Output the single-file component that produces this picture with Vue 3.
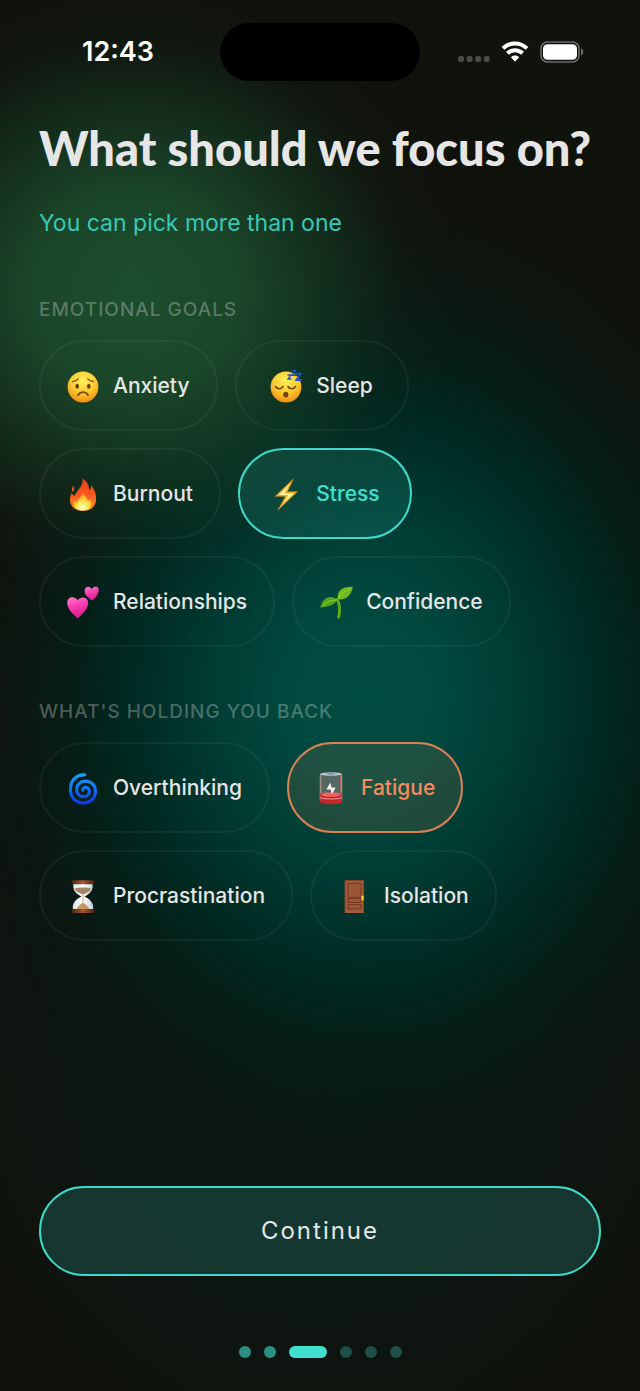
<script setup>
import { ref } from 'vue'

const sections = ref([
  {
    title: 'EMOTIONAL GOALS',
    tone: 'teal',
    rows: [
      [
        { name: 'Anxiety', icon: 'worried' },
        { name: 'Sleep', icon: 'sleeping' }
      ],
      [
        { name: 'Burnout', icon: 'fire' },
        { name: 'Stress', icon: 'bolt', on: true }
      ],
      [
        { name: 'Relationships', icon: 'hearts' },
        { name: 'Confidence', icon: 'seedling' }
      ]
    ]
  },
  {
    title: "WHAT'S HOLDING YOU BACK",
    tone: 'coral',
    rows: [
      [
        { name: 'Overthinking', icon: 'cyclone' },
        { name: 'Fatigue', icon: 'battery', on: true }
      ],
      [
        { name: 'Procrastination', icon: 'hourglass' },
        { name: 'Isolation', icon: 'door' }
      ]
    ]
  }
])

const steps = ['done', 'done', 'current', 'next', 'next', 'next']
</script>

<template>
  <div class="screen">
    <header class="status">
      <div class="clock"><time>12:43</time></div>
      <div class="island"></div>
      <div class="signals">
        <svg width="32" height="8" viewBox="0 0 32 8" fill="#4a4b47" aria-hidden="true">
          <rect x="0" y="1" width="6" height="6" rx="2" />
          <rect x="8.6" y="1" width="6" height="6" rx="2" />
          <rect x="17.2" y="1" width="6" height="6" rx="2" />
          <rect x="25.8" y="1" width="6" height="6" rx="2" />
        </svg>
        <svg width="28" height="22" viewBox="0 0 28 22" aria-hidden="true">
          <g fill="none" stroke="#fff" stroke-width="4">
            <path d="M2 7.4C8.8 .7 19.2 .7 26 7.4" />
            <path d="M6.4 12.3C10.6 8.2 17.4 8.2 21.6 12.3" />
          </g>
          <path d="M10.3 16.3c2.3-1.9 5.1-1.9 7.400 0L14 20.200z" fill="#fff" stroke="#fff" stroke-linejoin="round" />
        </svg>
        <svg width="44" height="22" viewBox="0 0 44 22" aria-hidden="true">
          <rect x="1" y="1" width="38" height="20" rx="6.5" fill="none" stroke="#6b6c69" stroke-width="1.6" />
          <rect x="3" y="3.2" width="34" height="15.6" rx="4.5" fill="#fff" />
          <path d="M41 7.600c3 1 3 5.800 0 6.800z" fill="#6b6c69" />
        </svg>
      </div>
    </header>

    <main class="content">
      <h1>What should we focus on?</h1>
      <p class="hint">You can pick more than one</p>

      <section v-for="section in sections" :key="section.title" class="group">
        <h2>{{ section.title }}</h2>
        <div class="rows">
          <div v-for="(row, r) in section.rows" :key="r" class="row">
            <button
              v-for="chip in row"
              :key="chip.name"
              type="button"
              class="chip"
              :class="chip.on ? section.tone : ''"
              :aria-pressed="!!chip.on"
              @click="chip.on = !chip.on"
            >
              <svg class="icon" viewBox="0 0 32 32" aria-hidden="true">
                <defs>
                  <radialGradient id="face" cx=".5" cy=".3" r=".72">
                    <stop offset="0" stop-color="#fff05a" />
                    <stop offset=".55" stop-color="#fdcb32" />
                    <stop offset="1" stop-color="#f08a12" />
                  </radialGradient>
                  <linearGradient id="flame" x2="0" y2="1">
                    <stop offset="0" stop-color="#e8401c" />
                    <stop offset=".55" stop-color="#fb5b20" />
                    <stop offset="1" stop-color="#ff9d1c" />
                  </linearGradient>
                  <radialGradient id="core" cx=".5" cy=".85" r=".7">
                    <stop offset="0" stop-color="#fffde0" />
                    <stop offset=".5" stop-color="#ffe34a" />
                    <stop offset="1" stop-color="#ffa126" />
                  </radialGradient>
                  <linearGradient id="pink" x2=".3" y2="1">
                    <stop offset="0" stop-color="#ff7fc8" />
                    <stop offset=".5" stop-color="#f93cae" />
                    <stop offset="1" stop-color="#e01d95" />
                  </linearGradient>
                  <linearGradient id="swirl" x2="0" y2="1">
                    <stop offset="0" stop-color="#12a4f4" />
                    <stop offset="1" stop-color="#0b3bf0" />
                  </linearGradient>
                  <linearGradient id="wood" x2="1">
                    <stop offset="0" stop-color="#4a2012" />
                    <stop offset=".5" stop-color="#a85a34" />
                    <stop offset="1" stop-color="#4a2012" />
                  </linearGradient>
                  <linearGradient id="glass" x2="1">
                    <stop offset="0" stop-color="#dbe3ee" />
                    <stop offset=".5" stop-color="#fff" />
                    <stop offset="1" stop-color="#c3cfdf" />
                  </linearGradient>
                </defs>

                <g v-if="chip.icon === 'worried'">
                  <circle cx="16" cy="17" r="15.4" fill="url(#face)" />
                  <g fill="none" stroke="#7a4a0c" stroke-linecap="round">
                    <path d="M5.5 11.7C7.8 11.5 9.9 10.5 11.2 8.9M26.5 11.7C24.2 11.5 22.1 10.5 20.8 8.9" stroke-width="1.3" />
                    <path d="M10.9 25.3c2.400-4.200 7.800-4.200 10.200 0" stroke-width="1.8" />
                  </g>
                  <ellipse cx="10.2" cy="16.2" rx="1.8" ry="2.5" fill="#6b3d08" />
                  <ellipse cx="21.8" cy="16.2" rx="1.8" ry="2.5" fill="#6b3d08" />
                </g>

                <g v-else-if="chip.icon === 'sleeping'">
                  <circle cx="16" cy="17" r="15.4" fill="url(#face)" />
                  <path d="M5.500 16.500c1.600 3 5.800 3 7.500 0M18 16.500c1.600 3 5.800 3 7.500 0" fill="none" stroke="#7a4a0c" stroke-width="1.6" stroke-linecap="round" />
                  <ellipse cx="15.8" cy="24.6" rx="2.6" ry="2.9" fill="#754208" />
                  <g fill="none" stroke="#1d4fd6">
                    <path d="M17.500 5h3.500l-3 4h3.500" stroke-width="1.3" />
                    <path d="M21.500.8h4l-3.300 4.600h3.900" stroke-width="1.4" />
                    <path d="M25.500 3.600h5.200l-4.400 6.400h5.500" stroke-width="1.9" />
                  </g>
                </g>

                <g v-else-if="chip.icon === 'fire'">
                  <path d="M15.500.3C20 3.300 22 7.400 22.400 12.200c1.500-1 1.900-3 1.500-5.200C28 11.500 29.500 17 29 22.200 28.500 29 23.200 33 16 33S3.400 29 3 22.200c-.2-3.400.9-5.600 2-7.400.5 1.700 1.200 2.600 2.600 3C9.500 12.400 16.600 9 15.500.3zM6.400 8c1.500 2.300 1.100 4.300-.8 5.800C4.300 11.700 4.800 9.700 6.400 8z" fill="url(#flame)" />
                  <path d="M16.200 14.500c.8 3.500 3.800 4.700 5 8.300 1-.8 1.400-1.800 1.300-2.900C27 27 23 32.500 16 32.500S5 28 7.800 22.500c.7 1.300 1.600 2 2.700 2.200-.3-4 4.700-5.700 5.700-10.200z" fill="url(#core)" />
                </g>

                <g v-else-if="chip.icon === 'bolt'">
                  <path d="M23.800.3L4.800 18.600h10.500L7.300 32.800 27.800 13.600H17.600z" fill="#f9a516" />
                  <path d="M20.300 5.300L8.500 16.900h9.700l-5.400 9L24 15.300H14.600z" fill="#fff3a6" />
                </g>

                <g v-else-if="chip.icon === 'hearts'">
                  <path d="M10.700 32.300C4.300 27 .2 22 .2 16.800c0-6.400 7.500-7.600 10.600-2.500 3.200-5 10.800-3.300 10.400 3-.4 5.200-4.800 10.200-10.500 15z" fill="url(#pink)" />
                  <path d="M25.300 14.500C20.500 11.600 17.600 8.400 17.600 5c0-5 5.500-5.600 7.200-1.700C27-.8 32-.2 31.700 4.400c-.2 3.500-2.700 7-6.400 10.100z" fill="url(#pink)" />
                </g>

                <g v-else-if="chip.icon === 'seedling'">
                  <path d="M17.200 13.500C20 18 20 25 18.700 31.300" fill="none" stroke="#63ad1b" stroke-width="2.8" stroke-linecap="round" />
                  <path d="M.2 21.700C2 13 9.500 7.500 17.200 13.600 15 20 7.300 20.700.2 21.700z" fill="#55a51c" />
                  <path d="M17.800 13.300C16.700 5 22 .4 32.800.8 31.500 9 26.200 14.700 17.800 13.300z" fill="#70bb20" />
                  <path d="M3 19.700C7 15.500 11.600 14 16.800 13.800M18.500 12.500C21 7.500 25 4.500 30.500 2.600" fill="none" stroke="#a5d64a" stroke-width=".8" />
                </g>

                <g v-else-if="chip.icon === 'cyclone'">
                  <path d="M17.700 2.800C7.600 2.500 3.300 10.300 3.500 17.700 3.700 26 9 31 16.300 30.900c7.300 0 12.400-5.400 12.200-12-.2-5.800-4.700-10-10.100-9.800-5.300.2-9 4-8.800 8.800.2 4.100 3.300 7 7.200 6.800 3.300-.1 5.800-2.500 5.600-5.400-.2-2.600-2-4.100-4.200-3.900-1.700.2-2.700 1.400-2.400 3" fill="none" stroke="url(#swirl)" stroke-width="3.2" stroke-linecap="round" />
                </g>

                <g v-else-if="chip.icon === 'battery'">
                  <rect x="5.3" y="1.5" width="21.4" height="28" rx="2" fill="#526863" stroke="#aeb6b5" stroke-width="1" />
                  <path d="M6.300 3v20M25.700 3v20" stroke="#b65e5d" stroke-width="1.2" />
                  <path d="M5.300 21.500h21.400v9c0 2.400-21.400 2.400-21.400 0z" fill="#c4242b" />
                  <ellipse cx="16" cy="22.5" rx="9.6" ry="2.3" fill="#f46162" />
                  <path d="M5.500 25.500c3 2 18 2 21 0" fill="none" stroke="#f5a6a5" />
                  <ellipse cx="16" cy="2" rx="10.7" ry="1.7" fill="#b9c2c4" />
                  <rect x="12" y="0" width="8" height="2.7" rx="1" fill="#819ab0" />
                  <path d="M15.300 10.500L11.500 17.500h4.200l1.300 4.700 3.700-6.700h-4.200z" fill="#f1f3f2" />
                </g>

                <g v-else-if="chip.icon === 'hourglass'">
                  <path d="M6.500 3h19c1 7-1.600 10-7.900 13.600C24 20 27 23.500 26 30H6c-1-6.500 2-10 8.400-13.400C8.100 13 5.500 10 6.500 3z" fill="url(#glass)" />
                  <path d="M7.700 8.500c4-1.400 12.600-1.400 16.600 0-.8 2.600-3.900 4.500-8.300 6.100-4.400-1.600-7.500-3.500-8.300-6.100z" fill="#a58465" />
                  <path d="M15.600 14h.8v9c2.200 1.300 4.600 3.300 6 6H9.600c1.400-2.700 3.800-4.700 6-6z" fill="#c39765" />
                  <rect x="4.7" y=".3" width="22.6" height="4" rx="1" fill="url(#wood)" />
                  <rect x="4.7" y="29" width="22.6" height="4" rx="1" fill="url(#wood)" />
                </g>

                <g v-else>
                  <rect x="6.5" y="0" width="19.6" height="33" fill="#7e452c" />
                  <rect x="7.5" y="1" width="17.6" height="32" fill="#a35c3c" />
                  <g fill="#9b5637" stroke="#713b25" stroke-width="1">
                    <rect x="10" y="3.3" width="13" height="14" />
                    <rect x="10" y="18.5" width="13" height="4" />
                    <rect x="10" y="24.5" width="13" height="4.5" />
                  </g>
                  <rect x="23.3" y="15.5" width="2.4" height="5" rx="1" fill="#f7cc1c" />
                </g>
              </svg>
              <span>{{ chip.name }}</span>
            </button>
          </div>
        </div>
      </section>
    </main>

    <footer class="footer">
      <button type="button" class="continue">Continue</button>
      <div class="dots" role="img" aria-label="Step 3 of 6">
        <span v-for="(step, i) in steps" :key="i" class="dot" :class="step"></span>
      </div>
    </footer>
  </div>
</template>

<style>
body {
  background: #10120c;
}
</style>

<style scoped>
.screen {
  box-sizing: border-box;
  min-height: 100vh;
  display: flex;
  flex-direction: column;
  padding: 0 39px;
  color: #e6e6e6;
  font-family: Inter, "Liberation Sans", sans-serif;
  background:
    radial-gradient(ellipse 330px 310px at 21% 21%, rgba(28, 80, 46, 0.97) 0%, rgba(28, 76, 44, 0.88) 32%, rgba(22, 64, 38, 0.58) 58%, rgba(18, 40, 26, 0.2) 82%, transparent 100%),
    radial-gradient(ellipse 420px 500px at 57% 50%, #004b42 0%, #00493f 18%, #003a32 38%, #002820 58%, rgba(4, 31, 24, 0.85) 70%, rgba(9, 25, 19, 0.5) 85%, transparent 100%),
    radial-gradient(ellipse 420px 500px at 50% 72%, rgba(8, 26, 20, 0.8) 0%, rgba(10, 23, 18, 0.6) 60%, transparent 100%),
    #10120c;
}

.status {
  display: grid;
  grid-template-columns: 1fr 200px 1fr;
  align-items: center;
  height: 58px;
  padding: 23px 0 37px;
}

.clock {
  padding-left: 43px;
  color: #fff;
  font-size: 27px;
  font-weight: 600;
  line-height: 32px;
}

.island {
  height: 58px;
  border-radius: 29px;
  background: #000;
}

.signals {
  display: flex;
  align-items: center;
  justify-content: flex-end;
  gap: 11px;
  padding-right: 17px;
}

.signals svg:first-child {
  margin-top: 14px;
}

h1,
h2,
p {
  margin: 0;
}

h1 {
  font-family: Lato, "Noto Sans", sans-serif;
  font-size: 47px;
  font-weight: 900;
  line-height: 60px;
}

.hint {
  margin-top: 29px;
  color: #38c9b8;
  font-size: 23px;
  line-height: 32px;
}

.group {
  margin-top: 53px;
}

.hint + .group {
  margin-top: 59px;
}

h2 {
  color: rgba(230, 230, 230, 0.33);
  font-size: 19px;
  font-weight: 500;
  line-height: 24px;
  letter-spacing: 1px;
}

.rows {
  display: flex;
  flex-direction: column;
  gap: 17px;
  margin-top: 18px;
}

.row {
  display: flex;
  flex-wrap: wrap;
  gap: 17px;
}

button {
  font-family: inherit;
  color: inherit;
  cursor: pointer;
}

.chip {
  display: flex;
  align-items: center;
  justify-content: center;
  gap: 14px;
  box-sizing: border-box;
  min-width: 174px;
  height: 91px;
  padding: 0 26px;
  border: 2px solid rgba(255, 255, 255, 0.05);
  border-radius: 46px;
  background: transparent;
  font-size: 21px;
  font-weight: 500;
  line-height: 28px;
}

.chip.teal {
  border-color: #3ed9c8;
  background: rgba(64, 224, 208, 0.12);
  color: #40e0d0;
}

.chip.coral {
  border-color: #d98055;
  background: rgba(255, 140, 90, 0.12);
  color: #f38c5e;
}

.icon {
  flex: none;
  width: 32px;
  height: 32px;
  overflow: visible;
}

.footer {
  margin-top: auto;
  padding: 40px 0 33px;
}

.continue {
  display: block;
  width: 100%;
  height: 90px;
  border: 2px solid #3ed9c8;
  border-radius: 45px;
  background: rgba(64, 224, 208, 0.17);
  font-size: 24px;
  line-height: 32px;
  letter-spacing: 2px;
}

.dots {
  display: flex;
  justify-content: center;
  gap: 13px;
  margin-top: 70px;
}

.dot {
  width: 12px;
  height: 12px;
  border-radius: 6px;
  background: #1e4f49;
}

.dot.done {
  background: #2b8f83;
}

.dot.current {
  width: 38px;
  background: #40e0d0;
}
</style>
